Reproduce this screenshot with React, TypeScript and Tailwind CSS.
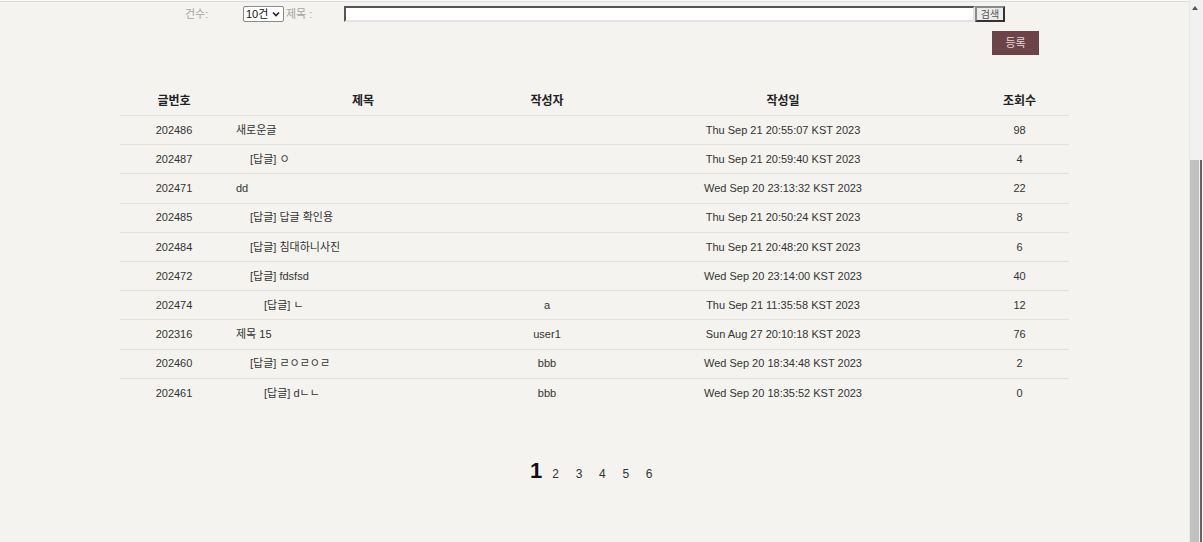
const rows = [
  { no: "202486", title: "새로운글", depth: 0, writer: "", date: "Thu Sep 21 20:55:07 KST 2023", hit: "98" },
  { no: "202487", title: "[답글] ㅇ", depth: 1, writer: "", date: "Thu Sep 21 20:59:40 KST 2023", hit: "4" },
  { no: "202471", title: "dd", depth: 0, writer: "", date: "Wed Sep 20 23:13:32 KST 2023", hit: "22" },
  { no: "202485", title: "[답글] 답글 확인용", depth: 1, writer: "", date: "Thu Sep 21 20:50:24 KST 2023", hit: "8" },
  { no: "202484", title: "[답글] 침대하니사진", depth: 1, writer: "", date: "Thu Sep 21 20:48:20 KST 2023", hit: "6" },
  { no: "202472", title: "[답글] fdsfsd", depth: 1, writer: "", date: "Wed Sep 20 23:14:00 KST 2023", hit: "40" },
  { no: "202474", title: "[답글] ㄴ", depth: 2, writer: "a", date: "Thu Sep 21 11:35:58 KST 2023", hit: "12" },
  { no: "202316", title: "제목 15", depth: 0, writer: "user1", date: "Sun Aug 27 20:10:18 KST 2023", hit: "76" },
  { no: "202460", title: "[답글] ㄹㅇㄹㅇㄹ", depth: 1, writer: "bbb", date: "Wed Sep 20 18:34:48 KST 2023", hit: "2" },
  { no: "202461", title: "[답글] dㄴㄴ", depth: 2, writer: "bbb", date: "Wed Sep 20 18:35:52 KST 2023", hit: "0" },
];

const indent = ["pl-[8px]", "pl-[22px]", "pl-[36px]"];

export default function App() {
  return (
    <div className="flex h-[542px] w-full overflow-hidden bg-[#f4f3ef] font-['Liberation_Sans','Noto_Sans_CJK_KR',sans-serif] text-[#333]">
      <main className="flex flex-1 flex-col">
        <div className="h-[2px] border-b border-[#dcdcdc] bg-[#fafafa]"></div>

        {/* search bar */}
        <div className="mt-[4px] flex h-[16px] items-center pl-[185px] text-[11px]">
          <span className="w-[58px] text-[#a5a5a5]">건수:</span>
          <div className="flex h-[16px] w-[41px] items-center justify-between rounded-[2px] border border-[#8a8a8a] bg-white pl-[2px] pr-[3px] text-[11px] text-[#111]">
            <span>10건</span>
            <svg width="8" height="6" viewBox="0 0 8 6">
              <path d="M1 1.5 L4 4.5 L7 1.5" fill="none" stroke="#222" strokeWidth="1.6" />
            </svg>
          </div>
          <span className="w-[60px] pl-[2px] text-[#a5a5a5]">제목 :</span>
          <div className="h-[16px] w-[631px] border-[2px] border-b-[#e4e4e4] border-l-[#555] border-r-[#e4e4e4] border-t-[#555] bg-white"></div>
          <div className="flex h-[16px] w-[30px] items-center justify-center border-[2px] border-b-[#333] border-l-[#8a8a8a] border-r-[#333] border-t-[#8a8a8a] bg-[#ececec] text-[10px] text-[#555]">
            검색
          </div>
        </div>

        <div className="mx-[120px] mt-[9px] flex justify-end pr-[30px]">
          <div className="flex h-[24px] w-[47px] items-center justify-center bg-[#6c4447] text-[11px] text-[#e8d6d6]">
            등록
          </div>
        </div>

        {/* board table */}
        <div className="mx-[120px] mt-[32px]">
          <div className="grid h-[29px] grid-cols-[108px_270px_98px_374px_99px] items-center border-b border-[#e2e0db] text-[12px] font-bold text-[#222]">
            <div className="text-center">글번호</div>
            <div className="text-center">제목</div>
            <div className="text-center">작성자</div>
            <div className="text-center">작성일</div>
            <div className="text-center">조회수</div>
          </div>
          {rows.map((r, i) => (
            <div
              key={r.no}
              className={`grid h-[29.2px] grid-cols-[108px_270px_98px_374px_99px] items-center text-[11px] ${i < rows.length - 1 ? "border-b border-[#e2e0db]" : ""}`}
            >
              <div className="text-center">{r.no}</div>
              <div className={indent[r.depth]}>{r.title}</div>
              <div className="text-center">{r.writer}</div>
              <div className="text-center">{r.date}</div>
              <div className="text-center">{r.hit}</div>
            </div>
          ))}
        </div>

        {/* pages */}
        <div className="mt-[52px] flex items-baseline pl-[530px] text-[#333]">
          <span className="mr-[10px] text-[22px] font-bold leading-none text-[#111]">1</span>
          <span className="w-[23.4px] text-[12px]">2</span>
          <span className="w-[23.4px] text-[12px]">3</span>
          <span className="w-[23.4px] text-[12px]">4</span>
          <span className="w-[23.4px] text-[12px]">5</span>
          <span className="w-[23.4px] text-[12px]">6</span>
        </div>
      </main>

      {/* window scrollbar */}
      <div className="flex w-[14px] flex-col border-l border-[#e9e9e9] bg-[#f1f1f1]">
        <div className="flex h-[160px] w-[10px] justify-center pt-[6px]">
          <svg width="6" height="4" viewBox="0 0 6 4">
            <path d="M0 4 L3 0 L6 4 Z" fill="#555" />
          </svg>
        </div>
        <div className="flex flex-1">
          <div className="w-[9px] bg-[#c1c1c1]"></div>
          <div className="w-[1px]"></div>
          <div className="w-[2px] bg-[#666]"></div>
        </div>
      </div>
    </div>
  );
}
